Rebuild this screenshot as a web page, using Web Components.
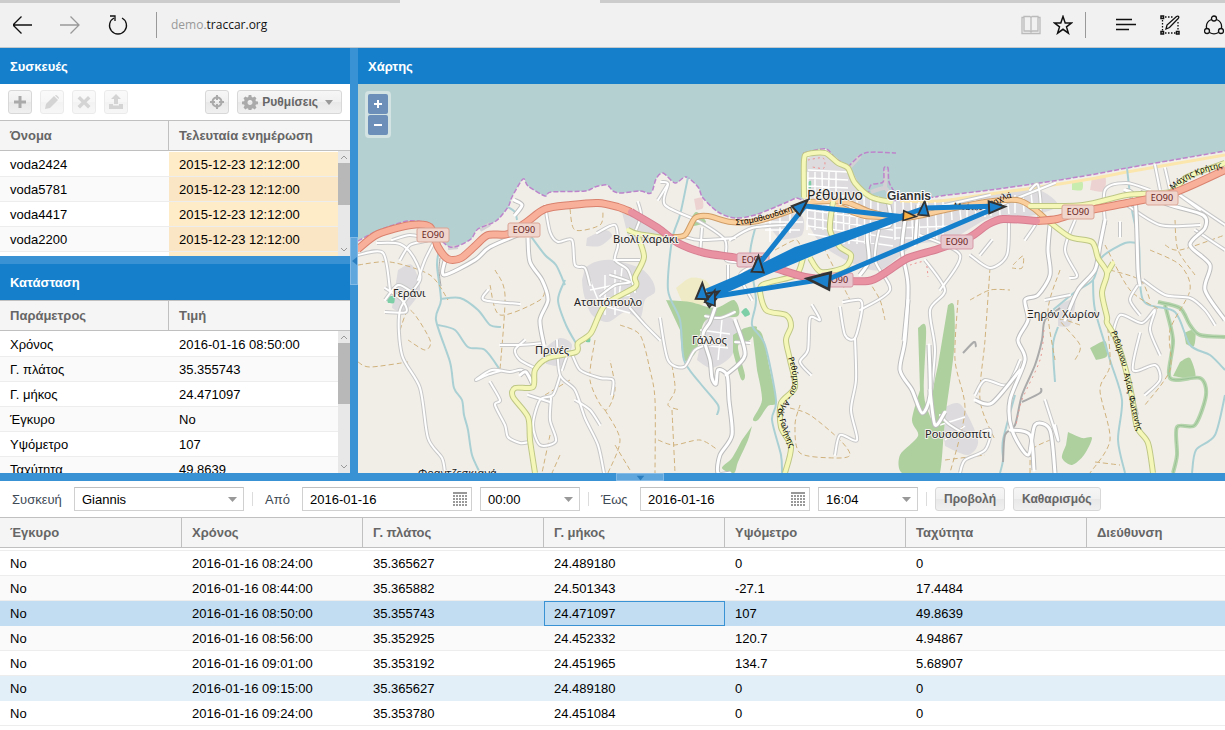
<!DOCTYPE html>
<html lang="el">
<head>
<meta charset="utf-8">
<title>Traccar</title>
<style>
html, body { margin: 0; height: 100%; overflow: hidden; }
body { font: 13px/24px "Liberation Sans", Arial, sans-serif; color: #000; background: #fff; }
</style>
</head>
<body>
<traccar-app></traccar-app>

<template id="t-browser-bar">
<style>
:host { display: flex; flex-direction: column; box-sizing: border-box; background: #f1f1f1; border-bottom: 1px solid #c4c9cc; font: 12px/18px "Open Sans", "Noto Sans", sans-serif; }
.tabs { display: flex; height: 3px; background: #ccc; }
.tabs i { margin-left: 400px; width: 200px; background: #f1f1f1; }
.bar { flex: 1; display: flex; align-items: center; }
button { border: 0; padding: 0; background: none; width: 48px; height: 40px; display: grid; place-items: center; }
.rule { width: 1px; height: 26px; background: #999; }
nav { display: flex; width: 156px; }
nav button:first-child { width: 46px; }
.url { flex: 1; padding-left: 14px; color: #999; }
.url b { font-weight: 400; color: #111; }
.page, .tools { display: flex; }
.page button { width: 32px; }
.page + .rule { margin-left: 6px; }
.tools { padding-left: 16px; margin-right: -13px; }
.tools .note { width: 40px; }
svg { fill: none; stroke: #111; stroke-width: 1.3; display: block; }
</style>
<div class="tabs"><i></i></div>
<div class="bar">
<nav>
<button aria-label="Πίσω"><svg width="20" height="20"><path d="M19 10H0M8.500 1.500L0 10l8.500 8.500"/></svg></button>
<button aria-label="Εμπρός"><svg width="20" height="20" style="stroke:#999"><path d="M0 10h19M10.500 1.500L19 10l-8.500 8.500"/></svg></button>
<button aria-label="Ανανέωση"><svg width="20" height="20"><path d="M6 3A8.500 8.500 0 1 0 14 3M2 1h5v5"/></svg></button>
</nav>
<span class="rule"></span>
<span class="url">demo.<b>traccar.org</b></span>
<div class="page">
<button aria-label="Ανάγνωση"><svg width="20" height="20" style="stroke:#bbb"><path d="M1 2.500h2v-1h6q1 .5 1 1.500q0-1 1-1.500h6v1h2v16H1zM10 3v14M3 2.500V16h5.500q1 0 1.500 1q.5-1 1.500-1H17V2.500"/></svg></button>
<button aria-label="Αγαπημένα"><svg width="20" height="20"><path stroke-width="1.500" d="M10 1.500l2.200 6.400h6.500l-5.200 4 1.900 6.300-5.400-3.900-5.400 3.900 1.900-6.300-5.200-4h6.500z"/></svg></button>
</div>
<span class="rule"></span>
<div class="tools">
<button aria-label="Κέντρο"><svg width="20" height="20"><path stroke-width="1.500" d="M0 4.500h16M0 9.500h20M0 14.500h13"/></svg></button>
<button class="note" aria-label="Σημείωση"><svg width="20" height="20"><path stroke-width="1.500" d="M1 1h2.500v2.500H1zM1 16.500h2.500V19H1zM16.500 16.500H19V19h-2.500z"/><path stroke-dasharray="1.500 1.500" d="M5 2h8M2.500 5v11M5 18h11M18 7v9"/><path d="M6 14l1-4L16.500 1.500q1.500-1 2.200.2.400 1-.5 1.800L9.500 12.500z"/></svg></button>
<button aria-label="Κοινή χρήση"><svg width="20" height="20"><circle cx="10" cy="3.500" r="2.500"/><circle cx="3" cy="16" r="2.500"/><circle cx="17" cy="16" r="2.500"/><path d="M7.500 4.500A8 8 0 0 0 2.500 13M12.500 4.500A8 8 0 0 1 17.500 13M5.500 17.500a9 9 0 0 0 9 0"/></svg></button>
</div>
</div>
</template>

<template id="t-panel-title">
<style>
:host { display: block; flex: none; }
h2 { margin: 0; padding: 2px 10px 0; font: bold 13px/34px "Liberation Sans", Arial, sans-serif; color: #fff; background: #157fcc; }
</style>
<h2><slot></slot></h2>
</template>

<template id="t-split-bar">
<style>
:host { display: grid; place-items: center; background: #3892d4; }
button { display: grid; place-items: center; padding: 0; box-sizing: border-box; width: 8px; height: 48px; border: 1px solid #83bbe6; background: #60a7dd; }
svg { display: block; fill: #2b7fc0; }
:host([axis=row]) { padding-left: 55px; }
:host([axis=row]) button { width: 48px; height: 8px; }
:host([axis=row]) svg { transform: rotate(-90deg); }
:host([plain]) button { display: none; }
</style>
<button aria-label="Σύμπτυξη"><svg width="5" height="8"><path d="M5 0v8L0 4z"/></svg></button>
</template>

<template id="t-tool-button">
<style>
:host { display: block; }
:host([disabled]) { opacity: .5; }
button { display: flex; align-items: center; justify-content: center; gap: 4px; box-sizing: border-box; min-width: 24px; height: 24px; padding: 0 3px; border: 1px solid #d8d8d8; border-radius: 3px; background: linear-gradient(#f6f6f6, #f0f0f0 50%, #e8e8e8 50%, #f0f0f0); font: bold 12px/16px "Liberation Sans", Arial, sans-serif; color: #666; white-space: nowrap; }
:host([wide]) button { padding: 0 8px; }
:host([menu]) button { padding: 0 8px 0 4px; }
svg { display: block; fill: #aaa; }
.arrow { display: none; margin-left: 3px; fill: #999; }
:host([menu]) .arrow { display: block; }
</style>
<button><span class="icon"></span><slot></slot><svg class="arrow" width="8" height="5"><path d="M0 0h8L4 5z"/></svg></button>
</template>

<template id="t-form-field">
<style>
:host { display: flex; align-items: center; gap: 8px; }
label { color: #3e4a56; width: var(--label, auto); padding-top: 2px; line-height: 24px; }
.box { display: grid; grid-template-columns: 1fr; align-items: center; width: var(--field, 100px); height: 24px; box-sizing: border-box; border: 1px solid #d0d0d0; border-top-color: #c0c0c0; background: #fff; }
input, select { grid-area: 1 / 1; width: 100%; height: 22px; box-sizing: border-box; margin: 0; border: 0; padding: 0 7px; appearance: none; background: none; color: #000; font: 13px/20px "Liberation Sans", Arial, sans-serif; }
select { padding-top: 2px; }
svg { grid-area: 1 / 1; justify-self: end; pointer-events: none; margin-right: 6px; fill: #999; }
svg.cal { margin-right: 3px; }
</style>
<label for="f"></label><span class="box"></span>
</template>

<template id="t-scroll-rail">
<style>
:host { display: flex; flex-direction: column; width: 12px; background: #e8e8e8; }
svg { display: block; flex: none; fill: none; stroke: #999; }
.thumb { background: #b8b8b8; }
.rest { flex: 1; }
</style>
<svg width="12" height="12"><path d="M3 8l3-3 3 3"/></svg><div class="thumb"></div><div class="rest"></div><svg width="12" height="12"><path d="M3 4l3 3 3-3"/></svg>
</template>

<template id="t-data-grid">
<style>
:host { display: grid; grid-template-columns: 1fr auto; grid-template-rows: 31px 1fr; flex: 1; min-height: 0; overflow: hidden; }
.rows { grid-area: 1 / 1 / 3 / 3; min-height: 0; overflow: hidden; }
table { width: 100%; border-collapse: separate; border-spacing: 0; table-layout: fixed; }
th { box-sizing: border-box; height: 31px; padding: 0 10px; text-align: left; font-weight: bold; line-height: 28px; color: #666; background: #f5f5f5; border: solid #c0c0c0; border-width: 1px 1px 1px 0; white-space: nowrap; }
th:last-child { border-right: 0; }
td { box-sizing: border-box; height: 25px; padding: 2px 10px 0; line-height: 22px; border-bottom: 1px solid #ededed; white-space: nowrap; }
tr.gap td { height: 3px; padding: 0; line-height: 1px; }
:host([rail]) tr.gap td { height: 1px; border: 0; }
tr.alt td { background: #fafafa; }
tr.over td { background: #e2eff8; border-color: #e2eff8; }
tr.sel td { background: #c2ddf2; border-color: #c2ddf2; }
tr.sel td.cur { border: 1px solid #3892d4; padding: 1px 9px 0; }
td.late { background: #feebc8; }
tr.alt td.late { background: #fae6c4; }
scroll-rail { grid-area: 2 / 2; }
</style>
<div class="rows"><table><colgroup></colgroup><thead><tr></tr></thead><tbody></tbody></table></div>
</template>

<template id="t-map-view">
<style>
:host { display: grid; flex: 1; min-height: 0; overflow: hidden; background: #b5d0d0; }
.chart { grid-area: 1 / 1; width: 100%; height: 100%; min-height: 0; display: block; }
.zoom { grid-area: 1 / 1; place-self: start; display: grid; gap: 1px; margin: 7px; padding: 3px; border-radius: 4px; background: #d3e3e3; z-index: 1; }
.zoom button { width: 20px; height: 20px; padding: 0; border: 0; display: grid; place-items: center; background: #6b8fb8; border-radius: 2px; }
.zoom path { stroke: #fff; stroke-width: 2; }
text { font-family: "Noto Sans", sans-serif; font-size: 11px; fill: #222; stroke: #f4f1ec; stroke-width: 2; paint-order: stroke; stroke-linejoin: round; }
.street { font-size: 8px; fill: #000; stroke: none; }
</style>
<div class="zoom">
<button aria-label="Μεγέθυνση"><svg width="8" height="8"><path d="M0 4h8M4 0v8"/></svg></button>
<button aria-label="Σμίκρυνση"><svg width="8" height="8"><path d="M0 4h8"/></svg></button>
</div>
</template>

<template id="t-traccar-app">
<style>
:host { display: grid; height: 100vh; grid-template-rows: 48px minmax(0, 425fr) 8px minmax(0, 249fr); }
.top { display: grid; grid-template-columns: 350px 8px minmax(0, 1fr); min-height: 0; }
.side { display: grid; grid-template-rows: minmax(0, 208fr) 8px minmax(0, 209fr); min-height: 0; }
.panel { display: flex; flex-direction: column; min-width: 0; min-height: 0; overflow: hidden; background: #fff; }
.bar { display: flex; align-items: center; gap: 8px; height: 36px; flex: none; padding: 0 8px; }
.bar .push { flex: 1; }
.report .bar { padding-left: 12px; }
.sep { width: 1px; height: 14px; background: #dcdcdc; }
.sep + form-field { margin-left: 4px; }
</style>
<browser-bar></browser-bar>
<div class="top">
<div class="side">
<section class="panel">
<panel-title>Συσκευές</panel-title>
<div class="bar">
<tool-button icon="add" label="Προσθήκη"></tool-button>
<tool-button icon="edit" label="Επεξεργασία" disabled></tool-button>
<tool-button icon="remove" label="Διαγραφή" disabled></tool-button>
<tool-button icon="send" label="Αποστολή" disabled></tool-button>
<span class="push"></span>
<tool-button icon="follow" label="Παρακολούθηση"></tool-button>
<tool-button icon="gear" menu>Ρυθμίσεις</tool-button>
</div>
<data-grid source="devices" rail="42"></data-grid>
</section>
<split-bar axis="row" plain></split-bar>
<section class="panel"><panel-title>Κατάσταση</panel-title><data-grid source="state" rail="61"></data-grid></section>
</div>
<split-bar></split-bar>
<section class="panel"><panel-title>Χάρτης</panel-title><map-view></map-view></section>
</div>
<split-bar axis="row"></split-bar>
<section class="panel report">
<div class="bar">
<form-field label="Συσκευή" value="Giannis" type="select" style="--label:54px;--field:170px"></form-field>
<span class="sep"></span>
<form-field label="Από" value="2016-01-16" type="date" style="--label:29px;--field:170px"></form-field>
<form-field value="00:00" type="select"></form-field>
<span class="sep"></span>
<form-field label="Έως" value="2016-01-16" type="date" style="--label:31px;--field:170px"></form-field>
<form-field value="16:04" type="select"></form-field>
<span class="sep"></span>
<tool-button wide>Προβολή</tool-button>
<tool-button wide>Καθαρισμός</tool-button>
</div>
<data-grid source="report"></data-grid>
</section>
</template>

<script>
class Base extends HTMLElement {
  connectedCallback() {
    if (this.shadowRoot) return;
    const tpl = document.getElementById('t-' + this.localName);
    this.attachShadow({ mode: 'open' }).append(tpl.content.cloneNode(true));
    this.setup(this.shadowRoot);
  }
  setup() {}
}

const GRIDS = {
  devices: { cols: ['Όνομα', 'Τελευταία ενημέρωση'], widths: [169], late: 1,
    rows: ['voda2424', 'voda5781', 'voda4417', 'voda2200', ''].map(n => [n, n && '2015-12-23 12:12:00']) },
  state: { cols: ['Παράμετρος', 'Τιμή'], widths: [169],
    rows: [['Χρόνος', '2016-01-16 08:50:00'], ['Γ. πλάτος', '35.355743'], ['Γ. μήκος', '24.471097'], ['Έγκυρο', 'No'], ['Υψόμετρο', '107'], ['Ταχύτητα', '49.8639']] },
  report: { cols: ['Έγκυρο', 'Χρόνος', 'Γ. πλάτος', 'Γ. μήκος', 'Υψόμετρο', 'Ταχύτητα', 'Διεύθυνση'],
    widths: [182, 181, 181, 181, 181, 181], sel: 2, cur: 3, over: 5,
    rows: [['08:24', '35.365627', '24.489180', '0', '0'], ['08:44', '35.365882', '24.501343', '-27.1', '17.4484'],
      ['08:50', '35.355743', '24.471097', '107', '49.8639'], ['08:56', '35.352925', '24.452332', '120.7', '4.94867'],
      ['09:01', '35.353192', '24.451965', '134.7', '5.68907'], ['09:15', '35.365627', '24.489180', '0', '0'],
      ['09:24', '35.353780', '24.451084', '0', '0']].map(([t, ...r]) => ['No', `2016-01-16 ${t}:00`, ...r, '']) }
};

const ICONS = {
  add: '<path d="M6.500 2h3v4.500H14v3H9.500V14h-3V9.500H2v-3h4.500z"/>',
  edit: '<path d="M1 15l1-5 8-8 4 4-8 8zM11 1.500q1-1 2 0l1.500 1.500q1 1 0 2z"/>',
  remove: '<path d="M4 2l4 4 4-4 2.500 2.500-4 3.800 4 3.700L12 14.500l-4-4-4 4L1.500 12l4-3.700-4-3.800z"/>',
  send: '<path d="M8 0l5 5h-3v5H6V5H3zM1 10h4v1.500h6V10h4v5H1z"/>',
  follow: '<path fill-rule="evenodd" d="M7 1h2v1.600A5.500 5.500 0 0 1 13.400 7H15v2h-1.600A5.500 5.500 0 0 1 9 13.400V15H7v-1.600A5.500 5.500 0 0 1 2.600 9H1V7h1.600A5.500 5.500 0 0 1 7 2.600zM7 4.500A4 4 0 0 0 4.500 7H6v2H4.500A4 4 0 0 0 7 11.500V10h2v1.500A4 4 0 0 0 11.500 9H10V7h1.500A4 4 0 0 0 9 4.500V6H7z"/>',
  gear: '<path fill-rule="evenodd" d="M6.700 1h2.600l.4 2 1.200.5 1.700-1.100 1.900 1.900-1.100 1.700.5 1.200 2.100.4v2.600l-2.100.4-.5 1.200 1.100 1.700-1.900 1.900-1.700-1.100-1.200.5-.4 2H6.700l-.4-2-1.200-.5-1.700 1.100-1.900-1.900 1.100-1.700-.5-1.200L0 10.200V7.600l2.100-.4.5-1.200-1.100-1.700 1.900-1.900 1.700 1.100L6.300 3zM8 6a2.500 2.500 0 1 0 .01 0z"/>'
};

customElements.define('browser-bar', class extends Base {});
customElements.define('split-bar', class extends Base {});
customElements.define('panel-title', class extends Base {});
customElements.define('tool-button', class extends Base {
  setup(root) {
    const icon = ICONS[this.getAttribute('icon')], slot = root.querySelector('.icon');
    if (icon) slot.innerHTML = `<svg width="16" height="16">${icon}</svg>`; else slot.remove();
    if (this.hasAttribute('label')) root.querySelector('button').setAttribute('aria-label', this.getAttribute('label'));
    root.querySelector('button').disabled = this.hasAttribute('disabled');
  }
});
customElements.define('form-field', class extends Base {
  setup(root) {
    const label = root.querySelector('label'), box = root.querySelector('.box'), value = this.getAttribute('value');
    if (this.hasAttribute('label')) label.textContent = this.getAttribute('label'); else label.remove();
    if (this.getAttribute('type') === 'select') {
      box.innerHTML = `<select id="f"${this.hasAttribute('label') ? '' : ' aria-label="Ώρα"'}><option>${value}</option></select><svg width="9" height="5"><path d="M0 0h9L4.500 5z"/></svg>`;
    } else {
      let cells = '';
      for (let y = 0; y < 4; y++) for (let x = 0; x < 5; x++) if (x !== 2 || y !== 1) cells += `M${x * 3} ${3 + y * 3}h2v2h-2z`;
      box.innerHTML = `<input id="f" value="${value}"><svg class="cal" width="15" height="14"><path d="M0 0h14v2H0z${cells}M6 7h2M7 6v2"/><path d="M6 6h2v2H6z"/></svg>`;
    }
  }
});
customElements.define('scroll-rail', class extends Base {
  setup(root) { root.querySelector('.thumb').style.height = this.getAttribute('thumb') + 'px'; }
});
customElements.define('data-grid', class extends Base {
  setup(root) {
    const g = GRIDS[this.getAttribute('source')];
    root.querySelector('colgroup').innerHTML = g.cols.map((_, i) => `<col${g.widths[i] ? ` style="width:${g.widths[i]}px"` : ''}>`).join('');
    root.querySelector('thead tr').innerHTML = g.cols.map(c => `<th>${c}</th>`).join('');
    root.querySelector('tbody').innerHTML = `<tr class="gap">${'<td></td>'.repeat(g.cols.length)}</tr>` + g.rows.map((r, i) =>
      `<tr class="${i === g.sel ? 'sel' : i === g.over ? 'over' : i % 2 ? 'alt' : ''}">${r.map((c, j) =>
        `<td class="${j === g.late ? 'late' : i === g.sel && j === g.cur ? 'cur' : ''}">${c}</td>`).join('')}</tr>`).join('');
    if (this.hasAttribute('rail')) {
      const rail = document.createElement('scroll-rail');
      rail.setAttribute('thumb', this.getAttribute('rail'));
      root.append(rail);
    }
  }
});

/* Catmull-Rom curve through a flat "x,y x,y" list */
function curve(s, closed) {
  const p = s.trim().split(/\s+/).map(a => a.split(',').map(Number));
  let d = `M${p[0]}`;
  for (let i = 0; i < p.length - 1; i++) {
    const a = p[i - 1] || p[i], b = p[i], c = p[i + 1], e = p[i + 2] || c;
    const f = n => n.toFixed(1);
    d += `C${f(b[0] + (c[0] - a[0]) / 7)} ${f(b[1] + (c[1] - a[1]) / 7)} ${f(c[0] - (e[0] - b[0]) / 7)} ${f(c[1] - (e[1] - b[1]) / 7)} ${c[0]} ${c[1]}`;
  }
  return d + (closed ? 'Z' : '');
}
const line = (list, color, width, extra = '') => list.map(s =>
  `<path d="${curve(s)}" fill="none" stroke="${color}" stroke-width="${width}" stroke-linejoin="round" ${extra}/>`).join('');
const road = (list, edge, fill, width) => line(list, edge, width + 2) + line(list, fill, width, 'stroke-linecap="round"');
const area = (list, color) => list.map(s => `<path d="${curve(s, true)}" fill="${color}"/>`).join('');

const COAST = '358,241 371,234 385,228 408,221 428,223 435,231 443,242 450,247 458,246 471,239 478,229 496,221 508,207 512,197 523,179 528,186 545,196 551,192 585,191 595,187 607,185 613,191 621,193 640,191 651,193 656,179 663,173 675,183 686,177 698,187 703,198 718,212 735,218 755,215 785,203 796,198 804,197 803,157 808,152 826,149 835,158 848,167 851,180 861,192 872,198 895,200 935,197 940,196 990,190 1040,183 1090,175 1127,168 1173,160 1225,151';
const MAP = {
  urban: ['585,268 595,262 612,260 640,268 652,280 655,292 645,300 640,318 625,312 608,322 592,315 584,295 582,280', '587,238 605,230 612,236 600,246 586,246', '622,212 650,226 668,238 650,244 628,236',
    '804,160 826,152 848,168 862,192 895,200 960,198 1030,188 1058,205 1030,216 990,218 950,240 915,245 880,270 850,262 822,245 806,220', '398,270 412,265 420,290 404,312 392,308', '545,348 560,338 572,345 562,365 546,364',
    '706,318 722,315 738,325 732,355 712,368 697,360', '762,218 800,214 802,235 780,240', '940,410 960,404 978,440 968,455 945,446', '1058,305 1075,300 1070,325 1058,326'],
  green: ['666,300 690,302 715,308 734,300 738,316 706,320 696,352 684,360 680,330', '733,335 745,328 757,327 750,340 738,346 745,375 741,379 733,352', '752,328 762,334 770,370 776,402 768,406 758,420 753,419 762,400 757,370', '752,426 748,440 738,462 734,473 722,468 732,458 742,440', '918,328 926,328 924,395 934,430 930,473 902,473 900,455 918,436 912,420 920,390', '948,305 954,306 954,350 945,420 940,473 930,473 932,400 938,365', '688,225 696,212 706,222 694,226',
    '1090,348 1105,341 1107,356 1096,360', '1068,432 1082,438 1092,438 1084,455 1072,465 1062,458 1066,445', '1180,362 1190,358 1195,378 1173,376', '1184,333 1195,330 1194,346 1186,344'],
  river: ['440,245 437,265 441,300 436,320 450,362 454,388 462,400 464,415 468,430 472,455 480,473', '441,299 460,298 478,310 490,325 501,327', '438,325 455,330 468,347 485,350 500,370', '508,207 515,212 517,220', '530,235 545,255 556,265 565,285', '565,280 558,300 566,325 577,345', '688,177 680,215 672,240 668,290 680,320 684,360 700,383 718,405 717,415', '756,225 750,255 756,300 752,325 765,345 776,400 772,420 781,455 782,473', '1127,168 1132,210 1139,245 1143,300 1175,312 1190,345 1210,355 1225,370', '1138,243 1125,243 1102,257 1093,280 1075,292 1053,310', '1058,327 1053,345 1055,382', '1093,280 1095,310 1110,360 1122,400 1118,440 1125,473', '1225,395 1215,435 1196,450 1192,473', '1015,395 1003,440 1003,460 1000,473'],
  minor: ['358,255 383,253 390,290', '377,243 400,244 414,258 420,280 400,310 402,355 420,388 428,438 442,458 445,473', '385,300 398,285 412,292', '392,240 410,235 428,240 410,245 400,260', '385,288 402,300 406,312 385,312', '418,280 425,260 435,240', '488,290 484,300 520,304', '500,345 520,345 544,343', '500,371 487,375 476,380 492,370 510,372 522,370 533,380', '490,382 500,400 495,405 505,425 508,437 520,443 530,442', '535,368 520,360 515,350 525,340', '545,205 550,232 558,242 572,240 575,265 585,268 590,285', '638,202 641,215 636,230', '597,233 615,225 618,245 615,260 628,270 635,292', '614,260 640,260', '600,296 615,285 630,282 610,275', '630,308 645,325 660,340', '557,340 560,375 575,390 585,418 598,445 604,473', '562,370 570,352 580,370 600,378 613,380 612,395', '560,376 553,395 540,400 533,425 540,445 556,441 550,420 551,398', '528,395 550,402', '575,400 590,410 600,425', '661,182 668,184 665,205 700,222 725,240 726,260 740,262', '668,184 658,200', '685,237 700,240 735,238', '702,228 700,255', '730,240 752,228 785,225', '728,265 728,290', '756,265 740,275 752,300', '735,312 720,318 705,316', '660,318 668,360 684,367 695,350 715,342', '735,342 750,343', '811,375 800,362 808,350 810,318 820,320 812,305', '840,307 845,335 855,338 862,310 860,300 843,302', '855,338 856,380 851,410 857,440 840,435 835,455', '880,225 875,260 890,290 860,310', '925,260 945,290 930,310 935,350 930,400', '920,235 960,255 940,290', '970,255 990,268 1007,255 1009,218', '980,255 992,240', '1030,190 1038,185 1040,215 1025,240', '945,205 990,195', '1000,205 1055,183', '1075,220 1065,250 1077,275 1070,278', '1105,225 1105,190 1126,183 1150,190', '1120,222 1120,237', '1127,205 1160,225 1200,225', '1138,285 1130,300 1140,315', '1160,190 1155,165', '1170,190 1165,168', '1143,280 1165,295 1190,298 1205,310 1215,325', '1112,337 1120,315 1142,323 1155,310 1150,330 1160,355', '1140,333 1133,370 1155,365 1160,380 1145,395', '1132,395 1137,415', '975,395 985,380 1007,385 1020,360', '940,415 950,425 970,435 990,430 985,450 965,460 960,473', '1045,400 1058,440 1055,425', '1195,230 1210,240 1225,250', '1200,210 1180,195 1225,225', '1045,300 1070,295'],
  street: ['446,257 444,275 475,260 490,247 525,232', '528,238 530,262 542,280 548,300 540,320 544,345', '520,375 526,372 533,385', '515,215 522,205 514,200', '715,308 710,322 703,335 710,360 712,378 716,384 718,370 727,375 729,400 732,435 720,455 718,473 730,473', '726,375 745,355 735,320', '888,200 890,225 868,230 869,260 860,275', '905,220 902,250 908,285 905,340 900,370 912,390 922,413 930,395 929,345', '908,300 904,340', '930,390 935,425 945,412', '918,205 915,245', '1050,225 1048,250 1050,275 1038,295 1025,300 1028,320 1018,340 1025,360 1010,400 1012,430 1028,455 1035,425 1050,430 1055,473', '1010,430 1030,435 1034,470', '1105,220 1100,245 1095,270 1078,290 1065,320', '1125,190 1135,200 1138,270 1140,285', '1140,192 1170,205 1203,215 1205,228 1190,245 1210,265 1205,290 1225,320', '975,400 992,403 1020,370'],
  path: ['358,265 390,262 430,275 448,300', '358,362 370,367 408,362', '400,330 410,310 430,340 425,350 408,340', '490,285 500,315 540,300 545,285', '495,270 505,295 500,370', '570,209 575,230 600,225 603,210', '595,340 590,380 605,410 615,390 610,360', '620,325 640,335 650,370 655,400 655,473', '545,395 570,380', '550,435 542,473', '605,410 620,440 608,473', '658,440 674,445 700,440 718,450', '672,365 675,390 668,405 680,410', '672,410 675,473', '790,408 810,415 840,440 850,455 835,458 800,453 795,425 800,405', '775,250 795,240 800,245', '820,240 840,280 850,300', '868,280 880,300 885,320', '958,300 955,360 965,410 950,473', '990,268 985,340 980,400 995,440', '970,300 990,290 1010,290', '1060,270 1048,310 1055,360', '1110,270 1140,280 1150,300', '1105,245 1130,290 1160,310', '1107,320 1110,365 1100,390 1110,440 1090,473', '1150,250 1180,265 1190,290 1170,330 1170,370 1145,405', '1175,220 1178,250 1195,275', '1165,245 1180,250 1225,235', '1013,265 1023,256 1022,268 1012,268', '1030,473 1032,450 1050,440', '1080,325 1060,320 1080,345 1075,360', '945,460 985,455', '615,445 630,470', '560,455 552,473', '1095,462 1120,465'],
  wood: ['1158,302 1180,308 1190,325 1200,335 1225,337', '1165,305 1173,340 1170,378 1200,378 1206,395 1195,425 1177,427 1177,455 1173,473']
};
const EO90 = '358,249 378,234 411,225 430,227 438,247 448,259 461,258 475,246 488,235 508,234 528,221 545,209 571,205 598,203 618,207 631,212';
const TRUNK = '631,212 658,228 678,243 705,253 738,258 771,267 805,277 831,280 868,281 885,273 908,258 938,249 970,237 987,225 1003,219 1037,221';
const EO90E = '1037,221 1057,219 1080,212 1127,203 1173,193 1225,170';

customElements.define('map-view', class extends Base {
  setup(root) {
    let grid = '';
    for (let i = 0; i < 11; i++) grid += `M${808 + i * 7} ${172 + (i > 4 ? 24 : 0)}l${i % 3 - 1} ${i > 4 ? 48 : 58}`;
    for (let i = 0; i < 9; i++) grid += `M${808} ${170 + i * 8}l${i > 3 ? 85 : 40} ${i > 3 ? 12 : 2}`;
    for (let i = 0; i < 18; i++) grid += `M${895 + i * 8} ${202 - (i > 8 ? (i - 8) : 0)}l${i % 3} ${i > 6 ? 18 : 38}`;
    grid += 'M765 230h35M765 222h38M770 218v24M780 216v22M790 213v20M895 228l60 -2M895 238l40 0M590 290l40 -8M595 300l35 -5M605 275v40M615 270v45M600 305l30 8M590 280l12 30M622 268l-4 40M700 330l30 4M702 345l26 3M722 320l-4 40M940 425l25 -8M945 440l20 -14';
    const shield = (x, y, pink) => `<g><rect x="${x - 16}" y="${y - 7}" width="32" height="14" rx="2" fill="${pink ? '#e8c8cf' : '#f0d5cd'}" stroke="${pink ? '#d698a5' : '#dba595'}"/><text x="${x}" y="${y + 3}" text-anchor="middle" style="font-size:9px;fill:#622;stroke:none">ΕΟ90</text></g>`;
    const arrow = (x, y, a, s = 1, c = '#1a80cb') => `<path transform="translate(${x} ${y}) rotate(${a}) scale(${s})" d="M0-9L6 7H-6z" fill="${c}" stroke="#333" stroke-width="2"/>`;
    const street = (id, t) => `<text class="street"><textPath href="#${id}">${t}</textPath></text>`;
    const svg = `<svg class="chart" viewBox="358 84 867 389" preserveAspectRatio="xMinYMin slice">
<path d="${curve(COAST)}L1225 473H358z" fill="#f1eee8"/>
${area(MAP.urban, '#dddbdd')}${area(['1092,178 1105,176 1104,191 1090,190', '694,199 702,198 703,208 696,210'], '#ecd3d1')}
${area(['676,288 690,278 705,280 712,292 700,306 682,302'], '#efebc7')}${area(MAP.green, '#aed09f')}
${area(['1072,182 1082,181 1082,190 1072,190'], '#c8ecae')}${area(['386,297 394,296 394,303 388,303', '586,338 590,337 590,342 586,342', '741,312 746,308 750,314 745,317', '808,182 811,181 811,188 808,188'], '#7dcfa8')}
${line(['900,201 940,201 990,194 1040,187 1090,179 1127,172 1173,164 1225,155'], '#fbe7ad', 3)}
${line(['850,167 860,156', '871,192 885,188 890,196', '885,188 886,170', '480,230 490,224', '448,248 458,247', '852,175 856,182'], '#d2d0d2', 4)}
${line([COAST, '848,167 865,153 896,153', '868,196 871,185 883,182 884,168 888,168 889,182 895,193'], '#bd84cc', 1.5, 'stroke-dasharray="5 2"')}
${line(MAP.wood, '#b5d4ac', 4)}${line(MAP.wood, '#98c294', 1)}
${line(MAP.river, '#aad0d4', 2)}${line(MAP.path, '#d0b27c', 1, 'stroke-dasharray="5 3"')}
${line(['1060,308 1045,320 1042,340 1035,365 1022,395 1015,425 1005,435 1003,462', '963,353 974,342 976,347', '1022,402 1040,393 1041,388'], '#aaa', 2)}
${line(['440,258 439,270 441,286'], '#aaa', 1)}
${line(['1044,330 1040,360 1022,400 1016,425'], '#e89a94', 1, 'stroke-dasharray="2 4"')}
${line(['808,160 823,158 824,168 812,167', '875,255 880,270', '910,265 925,262 928,277'], '#ee8f8f', 1, 'stroke-dasharray="2 3"')}
<path d="${grid}" stroke="#fff" stroke-width="1.500" fill="none"/>
${road(MAP.minor, '#c8c8c8', '#fff', 2)}${road(MAP.street, '#bdbdbd', '#fff', 3)}
${road(['671,237 685,235 695,218 708,216 731,222 758,221 798,208 811,202 845,202 871,212 905,218 945,210 985,202 1017,200 1033,208 1047,220', '838,206 865,216 905,217'], '#cf9d67', '#fbcf9b', 4)}
${road(['804,197 804,160 808,154 825,153 838,163 848,168 855,183 871,197 891,202', '1030,206 1083,205 1127,195 1170,192 1187,177 1225,163', '1047,220 1070,237 1092,242 1098,258 1107,273 1102,293 1107,317 1107,323 1115,337 1125,367 1132,397 1137,427 1148,443 1153,473', '1107,273 1113,263', '833,202 830,230 840,247 851,255 845,267 821,272 810,258', '803,258 796,275 771,282 760,288 766,310 786,315 791,326 786,340 790,360 795,387 781,403 781,427 791,447 785,473', '628,230 638,234 671,239', '637,234 644,257 635,277 635,287 605,305 591,333 578,343 576,352 548,358 535,370 533,387 515,388 513,397 528,417 530,440 535,473'], '#bfc786', '#f4f7b8', 4)}
${road([EO90, EO90E], '#d9826e', '#f8b09b', 6)}${road([TRUNK], '#d77f92', '#e892a2', 6)}
${shield(433, 235)}${shield(524, 230)}${shield(753, 260, 1)}${shield(837, 280, 1)}${shield(957, 242, 1)}${shield(1078, 212)}${shield(1162, 198)}
<text x="613" y="243">Βιολί Χαράκι</text><text x="393" y="297">Γεράνι</text><text x="574" y="306">Ατσιπόπουλο</text><text x="535" y="354">Πρινές</text>
<text x="692" y="344">Γάλλος</text><text x="1027" y="318">Ξηρόν Χωρίον</text><text x="925" y="438">Ρουσσοσπίτι</text><text x="418" y="477">Φραντζεσκιανά</text>
<text x="807" y="200" style="font-size:14px">Ρέθυμνο</text>
<defs><path id="r1" d="M736 225Q768 222 806 205"/><path id="r2" d="M788 358Q796 380 790 392T778 410Q780 430 796 460"/><path id="r3" d="M1111 332Q1122 360 1128 392T1142 446"/><path id="r4" d="M1173 190Q1188 174 1225 167"/><path id="r5" d="M953 208Q985 214 998 203T1040 205"/></defs>
${street('r1', 'Σταμαθιουδάκη')}${street('r2', 'Ρεθύμνου - Αγίας Γαλήνης')}${street('r3', 'Ρεθύμνου - Αγίας Φωτεινής')}${street('r4', 'Μάχης Κρήτης')}${street('r5', 'Μοάτσου Παχλά')}
<path d="M755 269L805 206L905 217M890 220L925 208L1000 206L831 278L711 297" fill="none" stroke="#157fcc" stroke-width="5" stroke-linejoin="round"/>
<path d="M705 289L738 275L795 247L892 216L905 219L850 240L762 277L712 299z" fill="#157fcc"/>
${arrow(801, 206, 48)}${arrow(758, 265, 3)}${arrow(820, 280, -84, 1.4)}${arrow(924, 209, 5, .9)}${arrow(996, 207, 87)}${arrow(909, 216, 94, .8, '#f8b045')}
${arrow(711, 296, 60)}${arrow(708, 299, -50, .9)}${arrow(712, 298, 20, .9)}${arrow(702, 292, 2)}
<text x="887" y="200" style="font:bold 12px 'Liberation Sans',Arial,sans-serif;fill:#333;stroke:#fff">Giannis</text></svg>`;
    root.append(document.createRange().createContextualFragment(svg));
  }
});
customElements.define('traccar-app', class extends Base {});
</script>
</body>
</html>
